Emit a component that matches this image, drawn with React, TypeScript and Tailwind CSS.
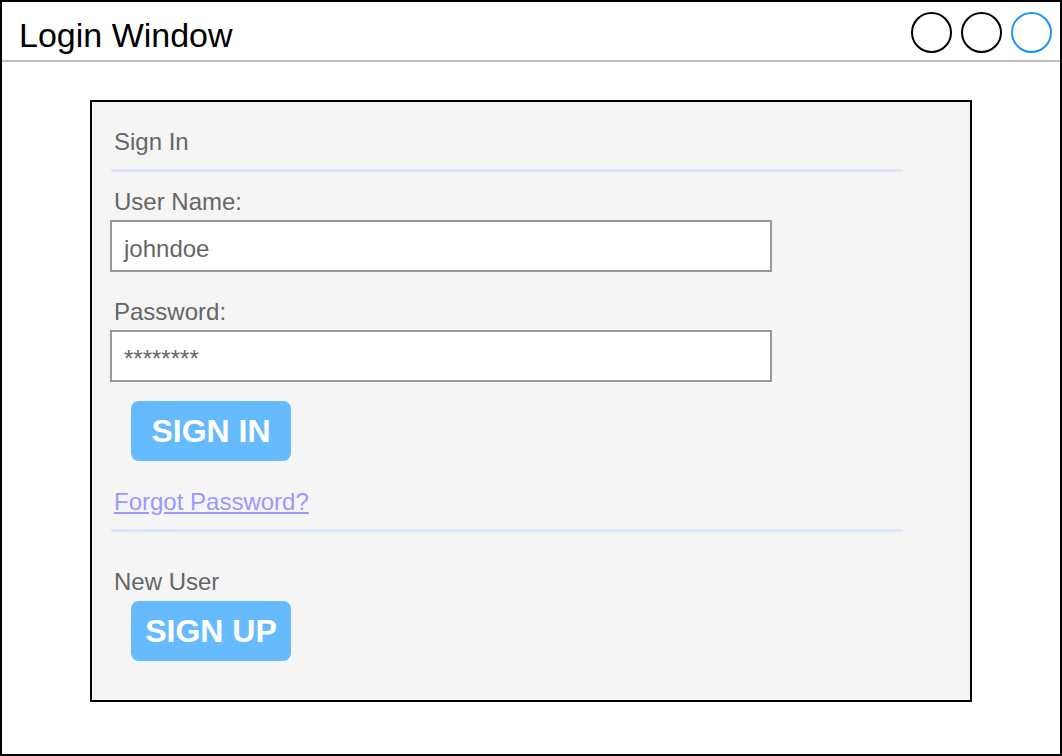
export default function App() {
  return (
    <div
      className="w-[1062px] h-[756px] border-2 border-black bg-white flex flex-col"
      style={{ fontFamily: '"Liberation Sans", Arial, sans-serif' }}
    >
      {/* Title bar */}
      <div className="h-[58px] flex items-start">
        <div className="pl-[17px] pt-[16px] text-[34px] leading-[34px] text-black">
          Login Window
        </div>
        <div className="ml-auto mr-[8px] mt-[10px] flex gap-[9px]">
          <div className="w-[41px] h-[41px] rounded-full border-2 border-black" />
          <div className="w-[41px] h-[41px] rounded-full border-2 border-black" />
          <div className="w-[41px] h-[41px] rounded-full border-2 border-[#1e90ff]" />
        </div>
      </div>
      <div className="h-[2px] bg-[#c0c0c0]" />

      {/* Sign in panel */}
      <div className="ml-[88px] mt-[38px] w-[882px] h-[602px] border-2 border-black bg-[#f5f5f5] flex flex-col items-start text-[#666666]">
        <div className="mt-[28px] ml-[22px] text-[24px] leading-[24px]">Sign In</div>
        <div className="mt-[15px] ml-[19px] w-[792px] h-[3px] bg-[#dae8fc]" />

        <div className="mt-[18px] ml-[22px] text-[24px] leading-[24px]">User Name:</div>
        <div className="mt-[6px] ml-[18px] w-[662px] h-[52px] border-2 border-[#999999] bg-white pl-[12px] pt-[15px] text-[24px] leading-[24px]">
          johndoe
        </div>

        <div className="mt-[28px] ml-[22px] text-[24px] leading-[24px]">Password:</div>
        <div className="mt-[6px] ml-[18px] w-[662px] h-[52px] border-2 border-[#999999] bg-white pl-[12px] pt-[15px] text-[24px] leading-[24px]">
          ********
        </div>

        <button className="mt-[19px] ml-[39px] w-[160px] h-[60px] rounded-lg bg-[#66bbff] text-white font-bold text-[32px] leading-none flex items-center justify-center">
          SIGN IN
        </button>

        <a href="#" className="mt-[29px] ml-[22px] text-[24px] leading-[24px] text-[#9999ff] underline">
          Forgot Password?
        </a>
        <div className="mt-[15px] ml-[19px] w-[792px] h-[3px] bg-[#dae8fc]" />

        <div className="mt-[38px] ml-[22px] text-[24px] leading-[24px]">New User</div>
        <button className="mt-[7px] ml-[39px] w-[160px] h-[60px] rounded-lg bg-[#66bbff] text-white font-bold text-[32px] leading-none flex items-center justify-center">
          SIGN UP
        </button>
      </div>
    </div>
  );
}
